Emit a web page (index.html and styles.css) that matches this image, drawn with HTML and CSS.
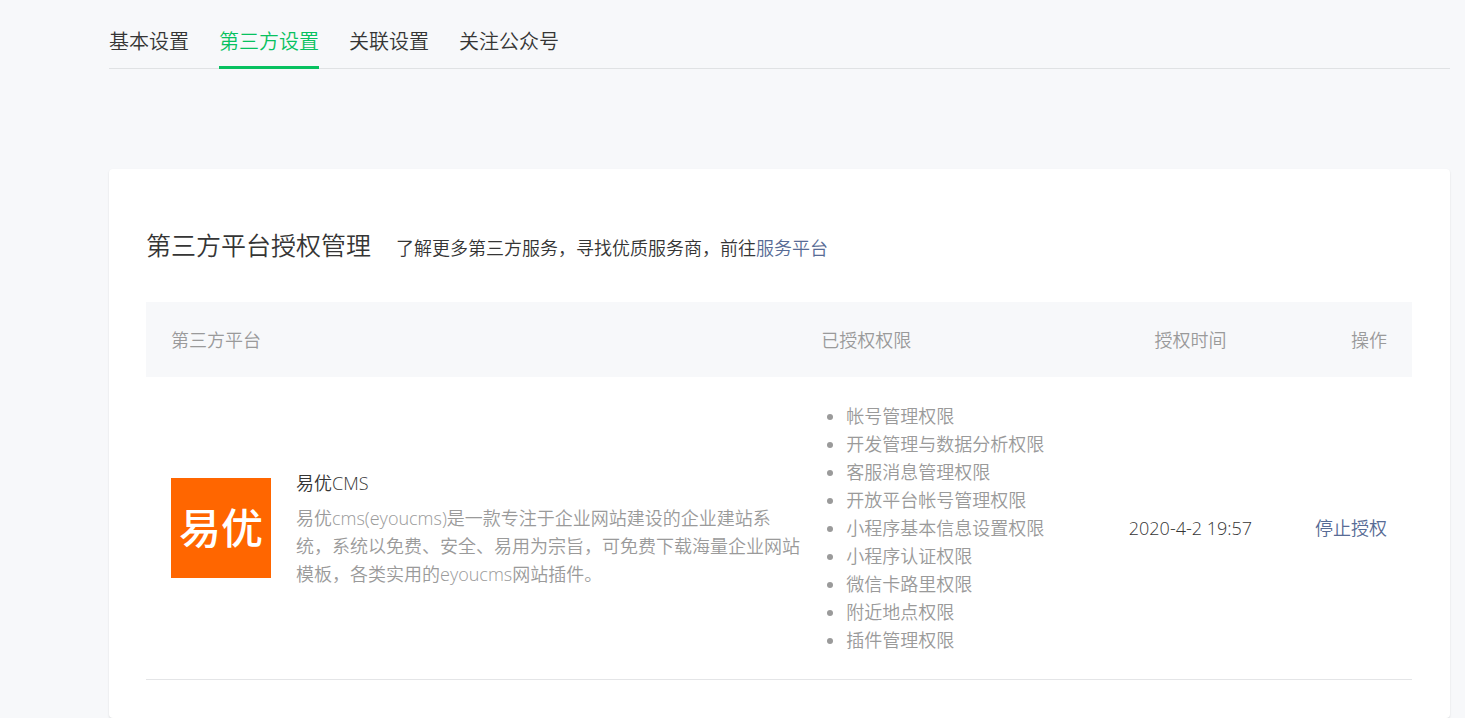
FILE: index.html
```
<!DOCTYPE html>
<html lang="zh-CN">
<head>
    <meta charset="UTF-8">
    <meta name="viewport" content="width=device-width, initial-scale=1.0">
    <title>第三方设置</title>
    <link rel="stylesheet" href="styles.css">
</head>
<body>
    <div class="page">
        <nav class="tabs">
            <a class="tab" href="#basic">基本设置</a>
            <a class="tab active" href="#third" aria-current="page">第三方设置</a>
            <a class="tab" href="#relation">关联设置</a>
            <a class="tab" href="#follow">关注公众号</a>
        </nav>

        <main class="card">
            <div class="card-header">
                <h2>第三方平台授权管理</h2>
                <p>了解更多第三方服务，寻找优质服务商，前往<a class="link" href="#platform">服务平台</a></p>
            </div>

            <table class="auth-table">
                <thead>
                    <tr>
                        <th class="col-platform">第三方平台</th>
                        <th class="col-scope">已授权权限</th>
                        <th class="col-time">授权时间</th>
                        <th class="col-action">操作</th>
                    </tr>
                </thead>
                <tbody>
                    <tr>
                        <td class="col-platform">
                            <div class="platform">
                                <div class="logo">易优</div>
                                <div class="info">
                                    <h3>易优CMS</h3>
                                    <p>易优cms(eyoucms)是一款专注于企业网站建设的企业建站系统，系统以免费、安全、易用为宗旨，可免费下载海量企业网站模板，各类实用的eyoucms网站插件。</p>
                                </div>
                            </div>
                        </td>
                        <td class="col-scope">
                            <ul class="scopes">
                                <li>帐号管理权限</li>
                                <li>开发管理与数据分析权限</li>
                                <li>客服消息管理权限</li>
                                <li>开放平台帐号管理权限</li>
                                <li>小程序基本信息设置权限</li>
                                <li>小程序认证权限</li>
                                <li>微信卡路里权限</li>
                                <li>附近地点权限</li>
                                <li>插件管理权限</li>
                            </ul>
                        </td>
                        <td class="col-time">2020-4-2 19:57</td>
                        <td class="col-action"><button class="link" type="button">停止授权</button></td>
                    </tr>
                </tbody>
            </table>
        </main>
    </div>
</body>
</html>
```
FILE: styles.css
```
* {
    box-sizing: border-box;
}
body {
    margin: 0;
    background-color: #f7f8fa;
    color: #353535;
    font-family: "Open Sans", "Noto Sans CJK SC", sans-serif;
    font-size: 18px;
    font-weight: 350;
    line-height: 28px;
}
h2, h3, p, ul {
    margin: 0;
    padding: 0;
    font-weight: inherit;
}
.page {
    padding: 14px 15px 0 109px;
}
.tabs {
    display: flex;
    gap: 30px;
    margin-bottom: 100px;
    border-bottom: 1px solid #e0e2e4;
}
.tab {
    margin-bottom: -1px;
    padding: 8px 0 4px;
    border-bottom: 3px solid transparent;
    color: #353535;
    font-size: 20px;
    line-height: 40px;
    text-decoration: none;
}
.tab.active {
    border-color: #07c160;
    color: #07c160;
}
.card {
    padding: 58px 38px 38px 37px;
    background: white;
    border-radius: 4px;
    box-shadow: 0 1px 2px rgba(0, 0, 0, 0.12);
}
.card-header {
    display: flex;
    align-items: baseline;
    gap: 25px;
    margin-bottom: 39px;
}
.card-header h2 {
    font-size: 25px;
    line-height: 36px;
}
.link {
    padding: 0;
    border: 0;
    background: none;
    color: #576b95;
    font: inherit;
    text-decoration: none;
    cursor: pointer;
}
.auth-table {
    width: 100%;
    border-collapse: collapse;
    table-layout: fixed;
}
.auth-table th {
    height: 75px;
    padding: 0 25px;
    background: #f7f8fa;
    color: #9a9a9a;
    font-weight: inherit;
    text-align: left;
}
.auth-table td {
    padding: 25px;
    border-bottom: 1px solid #e4e5e7;
}
.auth-table .col-platform {
    width: 52%;
    padding-right: 0;
}
.auth-table .col-scope {
    width: 21%;
    padding-left: 17px;
    padding-right: 0;
}
.auth-table .col-time {
    width: 19%;
    padding-left: 0;
    padding-right: 0;
    text-align: center;
}
.auth-table .col-action {
    padding-left: 0;
    text-align: right;
    white-space: nowrap;
}
.platform {
    display: flex;
    align-items: center;
    gap: 25px;
}
.logo {
    display: flex;
    flex: none;
    align-items: center;
    justify-content: center;
    width: 100px;
    height: 100px;
    background: #ff6600;
    color: white;
    font-size: 42px;
    font-weight: 500;
}
.info h3 {
    margin-bottom: 7px;
    font-size: 18px;
}
.info p {
    color: #9a9a9a;
}
.scopes {
    padding-left: 25px;
    color: #9a9a9a;
}
```
